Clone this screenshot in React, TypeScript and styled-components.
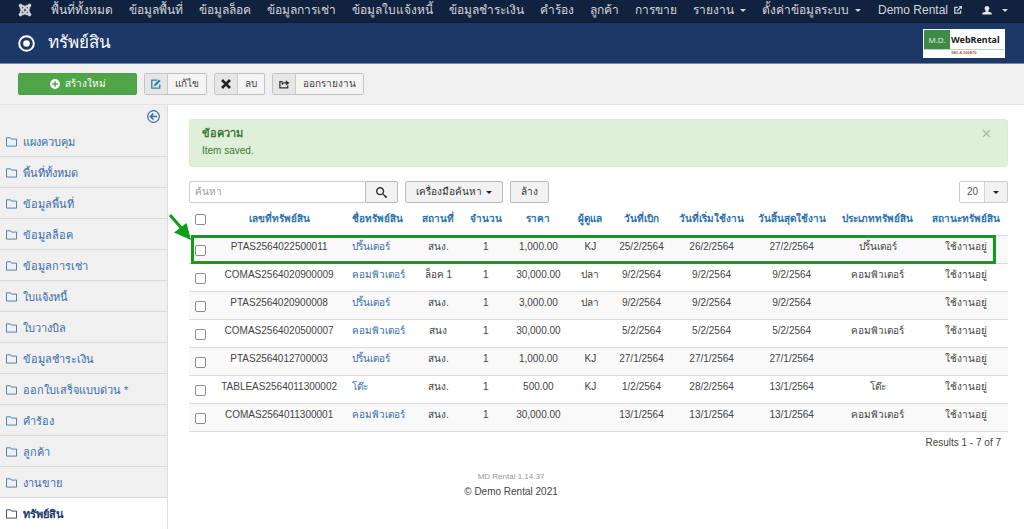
import React from "react";
import styled, { createGlobalStyle, css } from "styled-components";
import { FaJoomla } from "react-icons/fa";
import { ImSearch } from "react-icons/im";

const GlobalStyle = createGlobalStyle`
  *, *::before, *::after { box-sizing: border-box; }
  body {
    margin: 0;
    background: #fff;
    color: #444;
    font: 10px/14px "Liberation Sans", "Noto Sans", sans-serif;
  }
  a { text-decoration: none; }
  button, input, select { font: inherit; color: inherit; margin: 0; }
`;

const NavBar = styled.nav`
  display: flex;
  align-items: center;
  gap: 16px;
  padding: 0 16px 2px 18px;
  line-height: 20px;
  background: #10223e;
  border-bottom: 1px solid #0d1b32;
  white-space: nowrap;
  overflow: hidden;
`;

const NavLink = styled.a<{ $end?: boolean; $logo?: boolean }>`
  display: flex;
  align-items: center;
  gap: 6px;
  font-size: 12px;
  color: #d0d5dc;
  ${(p) => p.$end && css`margin-left: auto;`}
  ${(p) => p.$logo && css`padding-right: 3px;`}
`;

const UserLink = styled(NavLink)`
  gap: 10px;
  margin-left: 4px;
`;

const Caret = styled.span<{ $dark?: boolean }>`
  display: inline-block;
  border: 3px solid transparent;
  border-top-color: ${(p) => (p.$dark ? "#222" : "#d0d5dc")};
  border-bottom: 0;
`;

const TitleBar = styled.header`
  display: flex;
  align-items: center;
  justify-content: space-between;
  height: 41px;
  padding: 0 19px 0 18px;
  background: #1c3867;
  border-bottom: 1px solid #7186a8;
`;

const PageTitle = styled.h1`
  display: flex;
  align-items: center;
  gap: 13px;
  margin: 0;
  font-size: 17px;
  line-height: 24px;
  font-weight: 400;
  color: #fff;
`;

const Toolbar = styled.div`
  display: flex;
  gap: 7px;
  padding: 9px 18px;
  background: #f0f0f0;
  border-bottom: 1px solid #e4e4e4;
`;

const CreateButton = styled.button`
  display: flex;
  align-items: center;
  justify-content: center;
  gap: 5px;
  width: 119px;
  height: 22px;
  padding: 0;
  border: 1px solid #4b9c48;
  border-radius: 2px;
  background: #4fa548;
  color: #fff;
`;

const ToolButton = styled.button`
  display: flex;
  align-items: stretch;
  height: 22px;
  padding: 0;
  border: 1px solid #c4c4c4;
  border-radius: 2px;
  background: #f4f4f4;
  color: #444;
  line-height: 20px;
  overflow: hidden;
`;

const ToolIcon = styled.span`
  display: grid;
  place-items: center;
  width: 23px;
  background: #e6e6e6;
  border-right: 1px solid #c9c9c9;
`;

const ToolLabel = styled.span`
  padding: 0 7px;
`;

const Body = styled.div`
  display: grid;
  grid-template-columns: 168px minmax(0, 1fr);
`;

const Sidebar = styled.aside`
  background: #f0f0f0;
  border-right: 1px solid #dedede;
`;

const SidebarTop = styled.div`
  display: flex;
  justify-content: flex-end;
  padding: 5px 7px 3px;
`;

const IconButton = styled.button`
  display: flex;
  padding: 0;
  border: 0;
  background: none;
  color: #3a6ea5;
`;

const SideList = styled.ul`
  margin: 0;
  padding: 0;
  list-style: none;
`;

const SideLink = styled.a<{ $active?: boolean }>`
  display: flex;
  align-items: center;
  gap: 6px;
  height: 31px;
  padding: 1px 6px 0;
  border-bottom: 1px solid #d9d9d9;
  font-size: 11px;
  color: #3a6ea5;
  ${(p) =>
    p.$active &&
    css`
      background: #fff;
      color: #1c3867;
      font-weight: 700;
      border-bottom-color: #fff;
    `}
`;

const Main = styled.main`
  padding: 14px 16px 24px 21px;
`;

const Alert = styled.section`
  display: flex;
  justify-content: space-between;
  align-items: flex-start;
  padding: 5px 16px 6px 12px;
  border: 1px solid #d9eecf;
  border-radius: 3px;
  background: #dff0d8;
  color: #3c763d;
`;

const AlertTitle = styled.h4`
  margin: 0;
  font-size: 11px;
  line-height: 17px;
`;

const AlertText = styled.p`
  margin: 0;
  line-height: 18px;
`;

const CloseButton = styled.button`
  display: flex;
  padding: 4px 0;
  border: 0;
  background: none;
  color: #adbfa8;
`;

const Filters = styled.div`
  display: flex;
  align-items: center;
  gap: 7px;
  margin: 14px 0 0;
`;

const SearchGroup = styled.form`
  display: flex;
  height: 22px;
`;

const SearchInput = styled.input`
  width: 176px;
  padding: 0 5px;
  border: 1px solid #ccc;
  border-right: 0;
  border-radius: 2px 0 0 2px;
  background: #fff;
  outline: 0;
  &::placeholder { color: #999; opacity: 1; }
`;

const GrayButton = styled.button<{ $joined?: boolean }>`
  display: flex;
  align-items: center;
  gap: 4px;
  height: 22px;
  padding: 0 10px;
  border: 1px solid #bbb;
  border-radius: ${(p) => (p.$joined ? "0 2px 2px 0" : "2px")};
  background: #f2f2f2;
  color: #333;
`;

const LimitField = styled.div`
  display: grid;
  align-items: center;
  margin-left: auto;
  width: 49px;
  height: 22px;
  border: 1px solid #ccc;
  border-radius: 2px;
  background: linear-gradient(to right, #fff 24px, #d5d5d5 24px, #d5d5d5 25px, #f2f2f2 25px);
`;

const LimitSelect = styled.select`
  grid-area: 1 / 1;
  appearance: none;
  width: 100%;
  padding: 0 7px;
  border: 0;
  background: none;
  color: #555;
`;

const LimitCaret = styled(Caret)`
  grid-area: 1 / 1;
  justify-self: end;
  margin-right: 8px;
  pointer-events: none;
`;

const TableArea = styled.div`
  position: relative;
`;

const Table = styled.table`
  width: 100%;
  table-layout: fixed;
  border-collapse: collapse;
  white-space: nowrap;
  text-align: center;
`;

const HeadCell = styled.th<{ $left?: boolean }>`
  height: 32px;
  padding: 1px 0 0;
  color: #3071a9;
  ${(p) => p.$left && css`text-align: left; padding-left: 5px;`}
  a { color: inherit; }
`;

const Row = styled.tr<{ $odd?: boolean }>`
  height: 28px;
  border-top: 1px solid #ddd;
  background: ${(p) => (p.$odd ? "#f9f9f9" : "#fff")};
  &:last-child { border-bottom: 1px solid #ddd; }
`;

const Cell = styled.td<{ $left?: boolean }>`
  padding: 0 0 4px;
  ${(p) => p.$left && css`text-align: left; padding-left: 5px;`}
  a { color: #3a6ea5; }
`;

const CheckCell = styled.td`
  padding: 2px 0 0;
`;

const Check = styled.input`
  appearance: none;
  display: block;
  width: 11px;
  height: 11px;
  margin: 0 auto;
  border: 1px solid #8c8c8c;
  border-radius: 2px;
  background: #fff;
`;

const Highlight = styled.div`
  position: absolute;
  top: 32px;
  left: 2px;
  right: 12px;
  height: 29px;
  border: 3px solid #0aa116;
  pointer-events: none;
`;

const Arrow = styled.svg`
  position: absolute;
  top: 9px;
  left: -21px;
  pointer-events: none;
`;

const Results = styled.p`
  margin: 0;
  padding: 4px 7px 0;
  text-align: right;
`;

const Footer = styled.footer`
  margin-top: 20px;
  padding-right: 175px;
  text-align: center;
  line-height: 15px;
`;

const Version = styled.small`
  display: block;
  font-size: 8px;
  line-height: 14px;
  color: #999;
`;

const Brand = styled.div`
  width: 82px;
  height: 29px;
  padding: 1px;
  background: #fff;
  line-height: 1;
`;

const BrandTop = styled.div`
  display: flex;
  height: 20px;
  border-bottom: 1px solid #b9d8b9;
`;

const BrandMark = styled.span`
  display: grid;
  place-items: center;
  width: 26px;
  background: #3f8a45;
  color: #e6f2e6;
  font: 8px "Open Sans", sans-serif;
`;

const BrandName = styled.strong`
  padding: 4px 0 0 1px;
  color: #222;
  font: 700 9px/12px "Noto Sans", sans-serif;
`;

const BrandPhone = styled.div`
  padding-top: 1px;
  text-align: center;
  color: #b03a3a;
  font-size: 4px;
  font-weight: 700;
`;

const FolderIcon = () => (
  <svg width="11" height="10" viewBox="0 0 11 10" fill="none" stroke="currentColor" strokeWidth="1">
    <path d="M.5 .8h4l1 1.300h5v7H.5z" opacity=".85" />
  </svg>
);

const TargetIcon = () => (
  <svg width="17" height="17" viewBox="0 0 17 17" fill="none">
    <circle cx="8.500" cy="8.500" r="7.300" stroke="#fff" strokeWidth="2" />
    <circle cx="8.500" cy="8.500" r="3.300" fill="#fff" />
  </svg>
);

const BackIcon = () => (
  <svg width="13" height="13" viewBox="0 0 13 13" fill="none" stroke="currentColor">
    <circle cx="6.500" cy="6.500" r="5.800" strokeWidth="1.200" />
    <path d="M10 6.500H4M6.400 3.500l-3 3 3 3" strokeWidth="1.600" />
  </svg>
);

const PlusIcon = () => (
  <svg width="10" height="10" viewBox="0 0 10 10">
    <circle cx="5" cy="5" r="4.900" fill="#fff" />
    <path d="M5 2.200v5.600M2.200 5h5.600" stroke="#4fa548" strokeWidth="1.500" />
  </svg>
);

const EditIcon = () => (
  <svg width="10" height="10" viewBox="0 0 10 10" fill="none" stroke="#2f8299" strokeWidth="1.300">
    <path d="M6 1.200H.8v8h8V5.500" />
    <path d="M3.300 6.900l.5-2L8 .8l1.300 1.300-4.200 4.200z" fill="#2f8299" strokeWidth=".6" />
  </svg>
);

const CrossIcon = () => (
  <svg width="10" height="10" viewBox="0 0 10 10" stroke="#222" strokeWidth="2.600">
    <path d="M1 1l8 8M9 1L1 9" />
  </svg>
);

const ExportIcon = () => (
  <svg width="11" height="9" viewBox="0 0 11 9" fill="none" stroke="#333" strokeWidth="1.300">
    <path d="M3.600 1.600H.9v6.200h7.800V5.600" />
    <path d="M3.400 4.800V2.900h4" />
    <path d="M6.800 .3l3.800 2.600-3.800 2.600z" fill="#333" stroke="none" />
  </svg>
);

const ExternalIcon = () => (
  <svg width="8" height="8" viewBox="0 0 8 8" fill="none" stroke="#d0d5dc" strokeWidth="1.300">
    <path d="M3.800 1.400H.8v5.800h5.800V4.600M3 5l3.800-3.800" />
    <path d="M4.400 0H8v3.600z" fill="#d0d5dc" stroke="none" />
  </svg>
);

const UserIcon = () => (
  <svg width="10" height="9" viewBox="0 0 10 9" fill="#e2e5ea">
    <path d="M5 0c1.500 0 2.400 1 2.400 2.300 0 1.100-.5 2-1.100 2.500v.9L9 6.600c.6.300.8.900.8 1.900H.2C.2 7.500.4 6.900 1 6.600l2.700-.9v-.9c-.6-.5-1.100-1.400-1.100-2.500C2.600 1 3.500 0 5 0z" />
  </svg>
);

const navItems: { label: string; menu?: boolean }[] = [
  { label: "พื้นที่ทั้งหมด" },
  { label: "ข้อมูลพื้นที่" },
  { label: "ข้อมูลล็อค" },
  { label: "ข้อมูลการเช่า" },
  { label: "ข้อมูลใบแจ้งหนี้" },
  { label: "ข้อมูลชำระเงิน" },
  { label: "คำร้อง" },
  { label: "ลูกค้า" },
  { label: "การขาย" },
  { label: "รายงาน", menu: true },
  { label: "ตั้งค่าข้อมูลระบบ", menu: true },
];

const sideItems = [
  "แผงควบคุม",
  "พื้นที่ทั้งหมด",
  "ข้อมูลพื้นที่",
  "ข้อมูลล็อค",
  "ข้อมูลการเช่า",
  "ใบแจ้งหนี้",
  "ใบวางบิล",
  "ข้อมูลชำระเงิน",
  "ออกใบเสร็จแบบด่วน *",
  "คำร้อง",
  "ลูกค้า",
  "งานขาย",
  "ทรัพย์สิน",
];

const columnWidths = [22, 136, 65, 52, 43, 62, 42, 60, 80, 80, 92, 84];

const Column = styled.col<{ $width: number }>`
  width: ${(p) => p.$width}px;
`;

const headings = [
  "เลขที่ทรัพย์สิน",
  "ชื่อทรัพย์สิน",
  "สถานที่",
  "จำนวน",
  "ราคา",
  "ผู้ดูแล",
  "วันที่เบิก",
  "วันที่เริ่มใช้งาน",
  "วันสิ้นสุดใช้งาน",
  "ประเภททรัพย์สิน",
  "สถานะทรัพย์สิน",
];

const rows = [
  ["PTAS2564022500011", "ปริ้นเตอร์", "สนง.", "1", "1,000.00", "KJ", "25/2/2564", "26/2/2564", "27/2/2564", "ปริ้นเตอร์", "ใช้งานอยู่"],
  ["COMAS2564020900009", "คอมพิวเตอร์", "ล็อค 1", "1", "30,000.00", "ปลา", "9/2/2564", "9/2/2564", "9/2/2564", "คอมพิวเตอร์", "ใช้งานอยู่"],
  ["PTAS2564020900008", "ปริ้นเตอร์", "สนง.", "1", "3,000.00", "ปลา", "9/2/2564", "9/2/2564", "9/2/2564", "", "ใช้งานอยู่"],
  ["COMAS2564020500007", "คอมพิวเตอร์", "สนง", "1", "30,000.00", "", "5/2/2564", "5/2/2564", "5/2/2564", "คอมพิวเตอร์", "ใช้งานอยู่"],
  ["PTAS2564012700003", "ปริ้นเตอร์", "สนง.", "1", "1,000.00", "KJ", "27/1/2564", "27/1/2564", "27/1/2564", "", "ใช้งานอยู่"],
  ["TABLEAS2564011300002", "โต๊ะ", "สนง.", "1", "500.00", "KJ", "1/2/2564", "28/2/2564", "13/1/2564", "โต๊ะ", "ใช้งานอยู่"],
  ["COMAS2564011300001", "คอมพิวเตอร์", "สนง.", "1", "30,000.00", "", "13/1/2564", "13/1/2564", "13/1/2564", "คอมพิวเตอร์", "ใช้งานอยู่"],
];

export default function App() {
  return (
    <>
      <GlobalStyle />
      <NavBar>
        <NavLink href="#" aria-label="Joomla" $logo>
          <FaJoomla size={14} stroke="currentColor" strokeWidth={18} />
        </NavLink>
        {navItems.map((item) => (
          <NavLink key={item.label} href="#">
            {item.label}
            {item.menu && <Caret />}
          </NavLink>
        ))}
        <NavLink href="#" $end>
          Demo Rental <ExternalIcon />
        </NavLink>
        <UserLink href="#" aria-label="User menu">
          <UserIcon />
          <Caret />
        </UserLink>
      </NavBar>

      <TitleBar>
        <PageTitle>
          <TargetIcon />
          ทรัพย์สิน
        </PageTitle>
        <Brand>
          <BrandTop>
            <BrandMark>M.D.</BrandMark>
            <BrandName>WebRental</BrandName>
          </BrandTop>
          <BrandPhone>081-4-100970</BrandPhone>
        </Brand>
      </TitleBar>

      <Toolbar>
        <CreateButton type="button">
          <PlusIcon />
          สร้างใหม่
        </CreateButton>
        <ToolButton type="button">
          <ToolIcon><EditIcon /></ToolIcon>
          <ToolLabel>แก้ไข</ToolLabel>
        </ToolButton>
        <ToolButton type="button">
          <ToolIcon><CrossIcon /></ToolIcon>
          <ToolLabel>ลบ</ToolLabel>
        </ToolButton>
        <ToolButton type="button">
          <ToolIcon><ExportIcon /></ToolIcon>
          <ToolLabel>ออกรายงาน</ToolLabel>
        </ToolButton>
      </Toolbar>

      <Body>
        <Sidebar>
          <SidebarTop>
            <IconButton type="button" aria-label="Hide sidebar">
              <BackIcon />
            </IconButton>
          </SidebarTop>
          <SideList>
            {sideItems.map((label, i) => (
              <li key={label}>
                <SideLink href="#" $active={i === sideItems.length - 1}>
                  <FolderIcon />
                  {label}
                </SideLink>
              </li>
            ))}
          </SideList>
        </Sidebar>

        <Main>
          <Alert>
            <div>
              <AlertTitle>ข้อความ</AlertTitle>
              <AlertText>Item saved.</AlertText>
            </div>
            <CloseButton type="button" aria-label="Close">
              <svg width="9" height="9" viewBox="0 0 9 9" stroke="currentColor" strokeWidth="1.600">
                <path d="M1 1l7 7M8 1L1 8" />
              </svg>
            </CloseButton>
          </Alert>

          <Filters>
            <SearchGroup>
              <SearchInput type="text" placeholder="ค้นหา" aria-label="ค้นหา" />
              <GrayButton type="button" $joined aria-label="Search">
                <ImSearch size={11} />
              </GrayButton>
            </SearchGroup>
            <GrayButton type="button">
              เครื่องมือค้นหา <Caret $dark />
            </GrayButton>
            <GrayButton type="button">ล้าง</GrayButton>
            <LimitField>
              <LimitSelect aria-label="Rows per page" defaultValue="20">
                <option value="20">20</option>
                <option value="50">50</option>
              </LimitSelect>
              <LimitCaret $dark />
            </LimitField>
          </Filters>

          <TableArea>
            <Table>
              <colgroup>
                {columnWidths.map((w, i) => (
                  <Column key={i} $width={w} />
                ))}
              </colgroup>
              <thead>
                <tr>
                  <CheckCell as="th">
                    <Check type="checkbox" aria-label="Select all" />
                  </CheckCell>
                  {headings.map((h, i) => (
                    <HeadCell key={h} scope="col" $left={i === 1}>
                      <a href="#">{h}</a>
                    </HeadCell>
                  ))}
                </tr>
              </thead>
              <tbody>
                {rows.map((cells, r) => (
                  <Row key={cells[0]} $odd={r % 2 === 0}>
                    <CheckCell>
                      <Check type="checkbox" aria-label={cells[0]} />
                    </CheckCell>
                    {cells.map((text, i) => (
                      <Cell key={i} $left={i === 1}>
                        {i === 1 ? <a href="#">{text}</a> : text}
                      </Cell>
                    ))}
                  </Row>
                ))}
              </tbody>
            </Table>
            <Highlight />
            <Arrow width="26" height="28" viewBox="0 0 26 28">
              <path d="M2 3l14 16" stroke="#0aa116" strokeWidth="3" />
              <path d="M23 28L6 20.500 18.500 11z" fill="#0aa116" />
            </Arrow>
          </TableArea>
          <Results>Results 1 - 7 of 7</Results>
          <Footer>
            <Version>MD Rental 1.14.37</Version>
            © Demo Rental 2021
          </Footer>
        </Main>
      </Body>
    </>
  );
}
